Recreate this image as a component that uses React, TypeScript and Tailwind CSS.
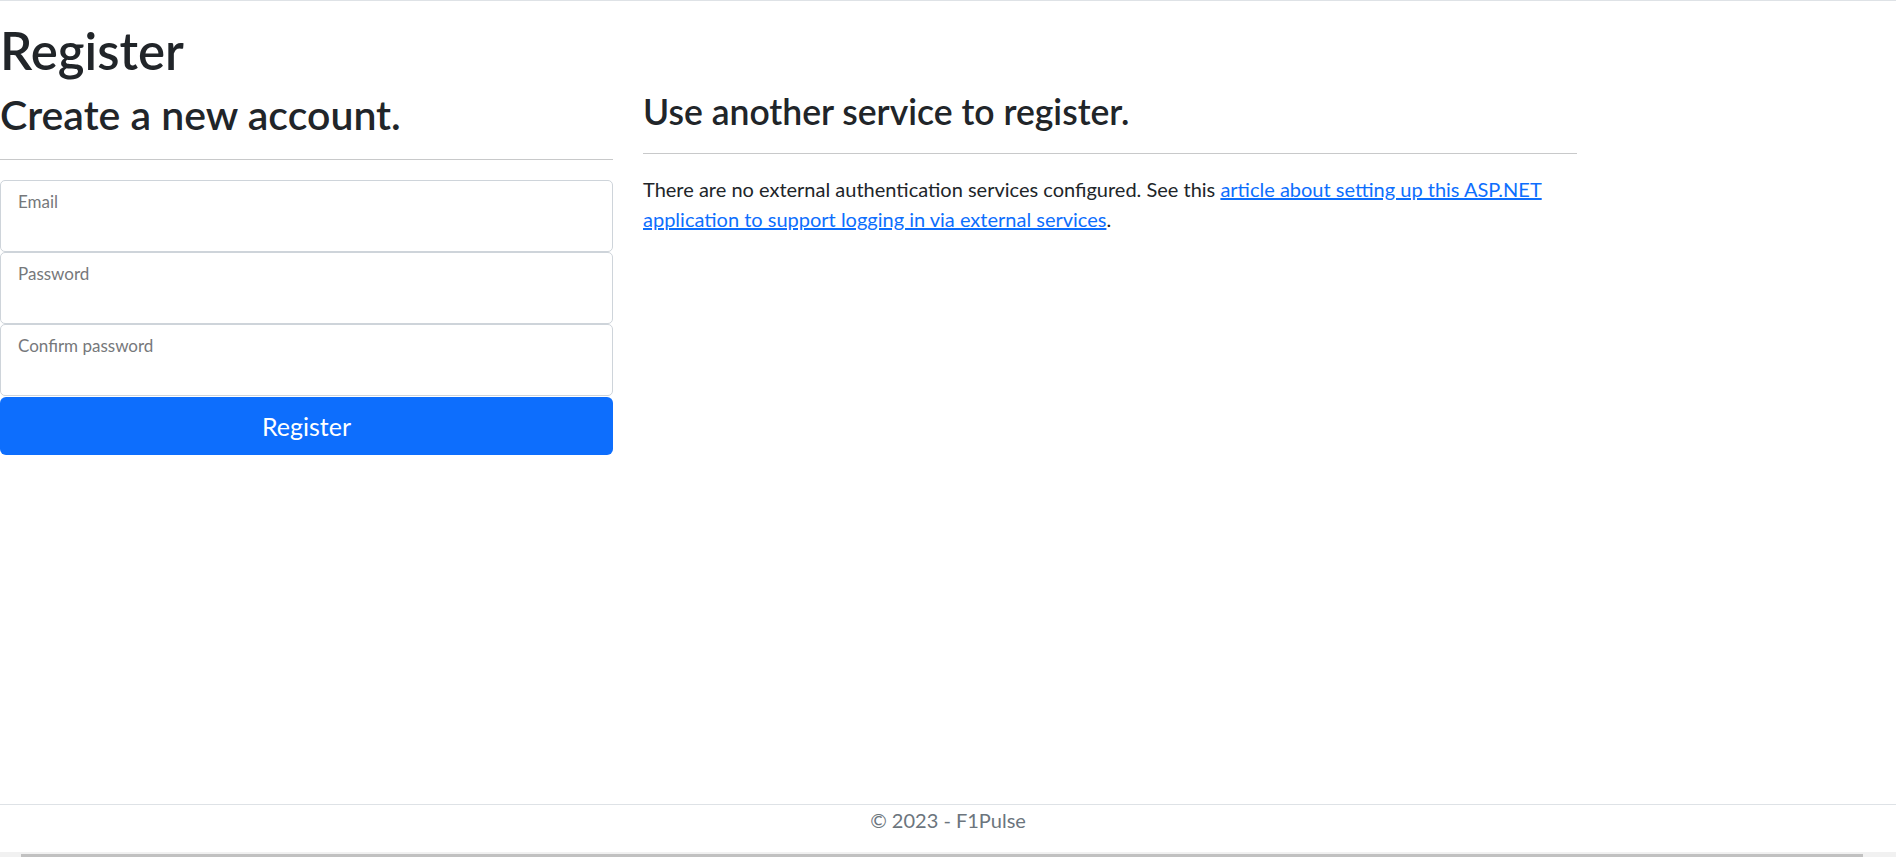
import React from "react";

function FloatingField({ label, type }: { label: string; type: string }) {
  return (
    <label className="flex h-[72px] w-full flex-col rounded-[5px] border border-[#ced4da] bg-white pl-[17px] pr-[15px] pt-[11px]">
      <span className="text-[17px] leading-[20px] text-[#76787b]">{label}</span>
      <input
        type={type}
        aria-label={label}
        className="min-h-0 w-full flex-1 bg-transparent text-[20px] text-[#212529] outline-none"
      />
    </label>
  );
}

export default function App() {
  return (
    <div className="flex h-[857px] w-full flex-col overflow-hidden bg-white font-['Lato','Open_Sans',sans-serif] text-[#212529]">
      <div className="h-px w-full shrink-0 bg-[#dee2e6]" />
      <main className="pt-5">
        <h1 className="text-[51px] font-semibold leading-[60px]">Register</h1>
        <div className="mt-[10px] flex gap-[30px]">
          <div className="w-[613px] shrink-0">
            <h2 className="text-[41px] font-semibold leading-[48px]">Create a new account.</h2>
            <hr className="my-5 border-t border-[#c8c9ca]" />
            <form className="flex flex-col" onSubmit={(e) => e.preventDefault()}>
              <FloatingField label="Email" type="email" />
              <FloatingField label="Password" type="password" />
              <FloatingField label="Confirm password" type="password" />
              <button
                type="submit"
                className="mt-px h-[58px] w-full rounded-[6px] bg-[#0d6efd] text-[25px] leading-[37px] text-white"
              >
                Register
              </button>
            </form>
          </div>
          <div className="w-[934px] shrink-0">
            <h3 className="text-[35.5px] font-semibold leading-[42px]">Use another service to register.</h3>
            <hr className="my-5 border-t border-[#c8c9ca]" />
            <p className="text-[20px] leading-[30px]">
              There are no external authentication services configured. See this{" "}
              <a href="#" className="text-[#0d6efd] underline">
                article about setting up this ASP.NET application to support logging in via external services
              </a>
              .
            </p>
          </div>
        </div>
      </main>
      <div className="flex-1" />
      <footer className="h-[48px] shrink-0 border-t border-[#dee2e6] text-center text-[20px] leading-[30px] text-[#6c757d]">
        © 2023 - F1Pulse
      </footer>
      <div className="h-[5px] w-full shrink-0 bg-[#f1f1f1] pl-[21px] pt-[2px]">
        <div className="h-[3px] w-[1842px] bg-[#c1c1c1]" />
      </div>
    </div>
  );
}
